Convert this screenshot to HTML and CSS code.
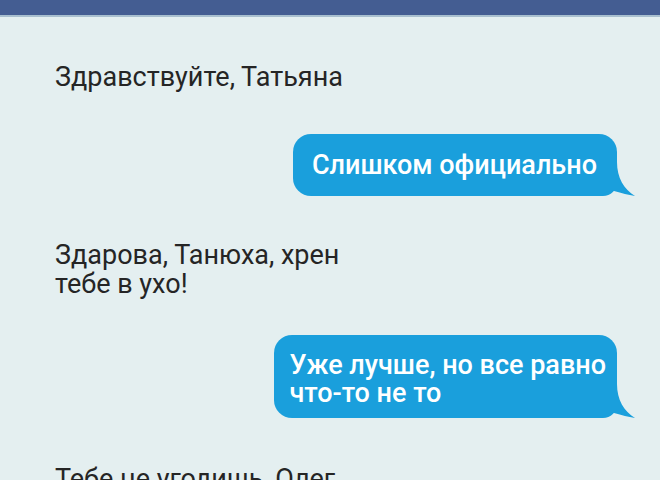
FILE: index.html
```html
<!DOCTYPE html>
<html lang="ru">
<head>
  <meta charset="UTF-8" />
  <title>Чат</title>
  <meta name="viewport" content="width=device-width, initial-scale=1.0" />
  <link rel="stylesheet" href="styles.css">
</head>
<body>

  <!-- Top bar -->
  <header class="topbar"></header>

  <main class="chat">
    <p class="msg msg-in">Здравствуйте, Татьяна</p>

    <div class="msg msg-out">
      <span class="bubble">Слишком официально</span>
      <svg class="tail" width="36" height="34" viewBox="0 0 36 34">
        <path d="M0 0 H17 C17 16 24 27 35 34 C28 33 22 31 14 29 C9 28 4 31 0 34 Z" fill="#1a9fdc"/>
      </svg>
    </div>

    <p class="msg msg-in">Здарова, Танюха, хрен<br>тебе в ухо!</p>

    <div class="msg msg-out msg-close">
      <span class="bubble bubble-multi">Уже лучше, но все равно<br>что-то не то</span>
      <svg class="tail" width="36" height="34" viewBox="0 0 36 34">
        <path d="M0 0 H17 C17 16 24 27 35 34 C28 33 22 31 14 29 C9 28 4 31 0 34 Z" fill="#1a9fdc"/>
      </svg>
    </div>

    <p class="msg msg-in msg-far">Тебе не угодишь, Олег</p>
  </main>

</body>
</html>
```

FILE: styles.css
```css
body {
  margin: 0;
  background-color: #e4eff0;
  font-family: Roboto, sans-serif;
  overflow: hidden;
}

.topbar {
  height: 15px;
  background-color: #445d92;
  border-bottom: 2px solid #a8bfcf;
}

.chat {
  display: flex;
  flex-direction: column;
  padding: 46px 43px 0 55px;
}

.msg {
  margin: 0;
  font-size: 27px;
  line-height: 29px;
}

.msg-in {
  color: #252525;
  align-self: flex-start;
  margin-top: 45px;
}

.msg-in:first-child {
  margin-top: 0;
}

.msg-out {
  align-self: flex-end;
  position: relative;
  margin-top: 42px;
}

.msg-close {
  margin-top: 36px;
}

.msg-far {
  margin-top: 47px;
}

.bubble {
  display: block;
  background-color: #1a9fdc;
  color: white;
  font-weight: 500;
  padding: 17px 20px 16px 19px;
  border-radius: 18px 18px 14px 18px;
}

.bubble-multi {
  line-height: 28px;
  padding: 16px 11px 11px 15px;
}

.tail {
  position: absolute;
  right: -19px;
  bottom: 0;
}
```
